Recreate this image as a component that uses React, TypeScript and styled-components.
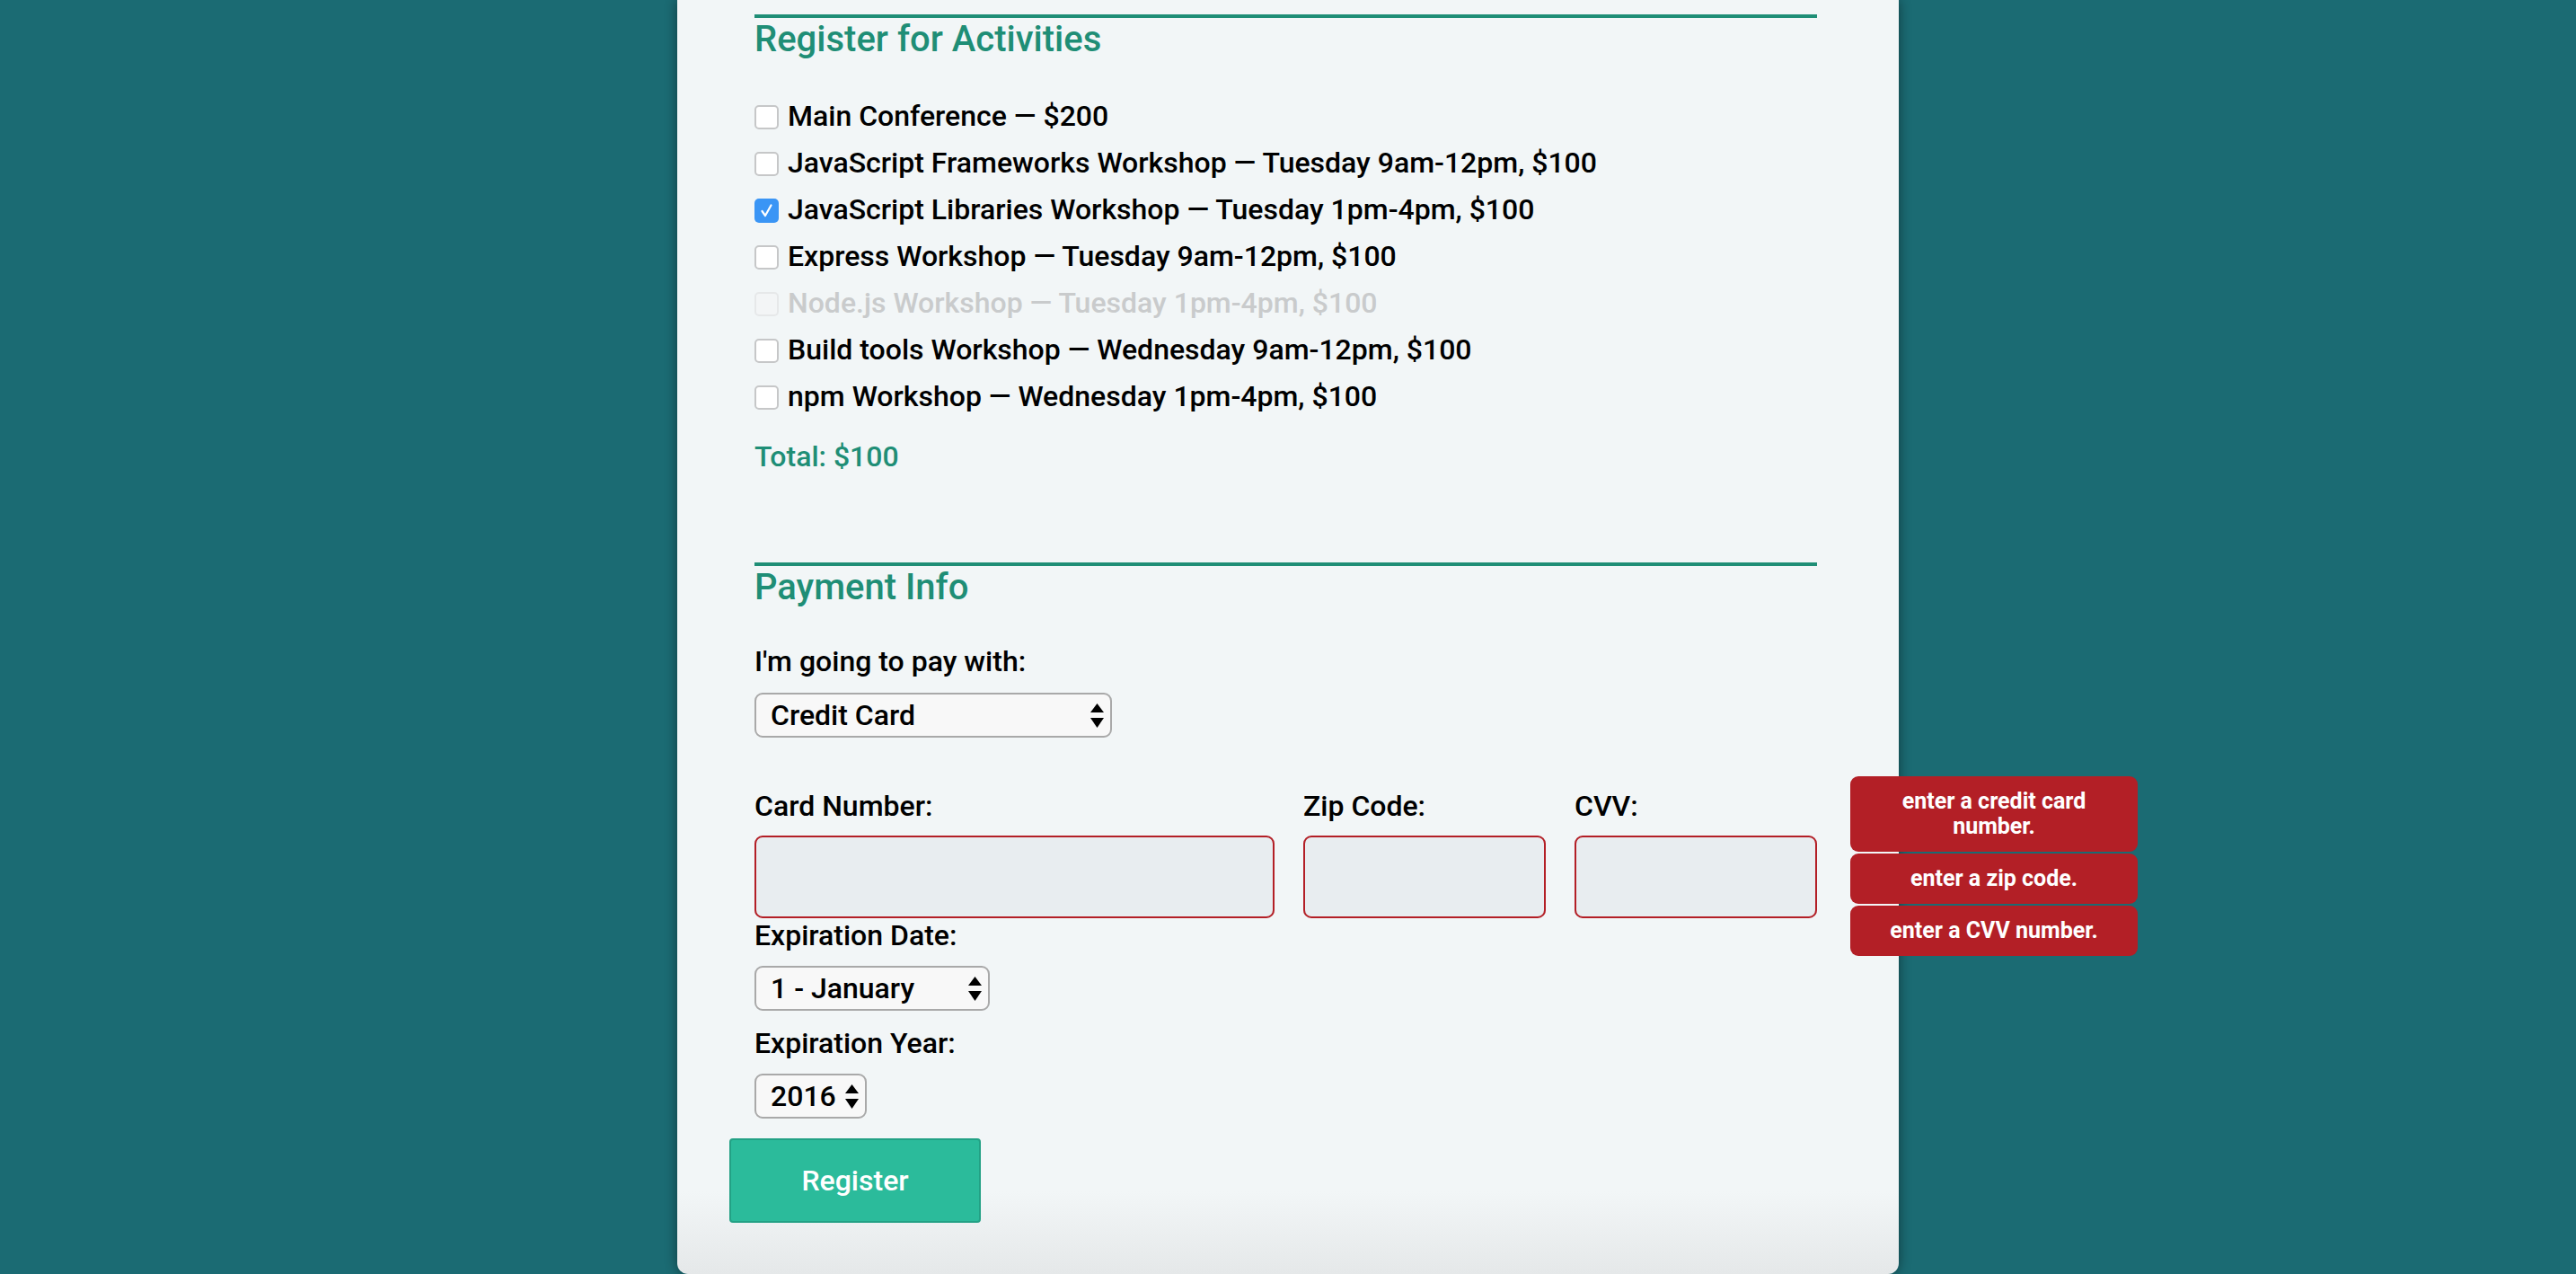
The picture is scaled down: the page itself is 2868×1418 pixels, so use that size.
import React from "react";
import styled, { createGlobalStyle } from "styled-components";

const GlobalStyle = createGlobalStyle`
  html, body {
    margin: 0;
    padding: 0;
    background: #1b6b73;
    font-family: Roboto, "Liberation Sans", Arial, sans-serif;
  }
  body {
    min-height: 1418px;
    overflow: hidden;
  }
`;

const GREEN = "#1f8e76";
const RED = "#b31f26";

const Panel = styled.main`
  box-sizing: border-box;
  width: 1360px;
  min-height: 1418px;
  margin: 0 auto;
  padding: 16px 91px 57px 86px;
  background: linear-gradient(to bottom, #f2f6f7 0, #f2f6f7 calc(100% - 92px), #e5e8e9 100%);
  border-radius: 0 0 12px 12px;
  box-shadow: 0 0 14px rgba(0, 0, 0, 0.45);
`;

const Form = styled.form`
  display: flex;
  flex-direction: column;
  align-items: flex-start;
`;

const Fieldset = styled.section<{ $mt?: number }>`
  display: flex;
  flex-direction: column;
  align-items: flex-start;
  align-self: stretch;
  margin-top: ${(p) => p.$mt ?? 0}px;
`;

const Legend = styled.h2`
  align-self: stretch;
  margin: 0;
  border-top: 4px solid ${GREEN};
  font-size: 40px;
  line-height: 48px;
  font-weight: 500;
  color: ${GREEN};
`;

const ActivityList = styled.div`
  display: flex;
  flex-direction: column;
  gap: 14px;
  margin-top: 42px;
`;

const ActivityRow = styled.label<{ $disabled?: boolean }>`
  display: flex;
  align-items: center;
  gap: 10px;
  font-size: 32px;
  line-height: 38px;
  font-weight: 500;
  color: ${(p) => (p.$disabled ? "#c9cbcc" : "#000")};
`;

const CheckBox = styled.span<{ $checked?: boolean; $disabled?: boolean }>`
  box-sizing: border-box;
  width: 27px;
  height: 27px;
  margin-top: 2px;
  flex: none;
  display: flex;
  align-items: center;
  justify-content: center;
  border-radius: 5px;
  border: ${(p) =>
    p.$checked ? "none" : p.$disabled ? "2px solid #e6e8e9" : "2px solid #c6c7c8"};
  background: ${(p) => (p.$checked ? "#3a95f5" : p.$disabled ? "#f3f5f6" : "#ffffff")};
`;

const Total = styled.p`
  margin: 29px 0 0;
  font-size: 32px;
  line-height: 38px;
  font-weight: 500;
  color: ${GREEN};
`;

const FieldLabel = styled.label<{ $mt?: number }>`
  display: block;
  margin-top: ${(p) => p.$mt ?? 0}px;
  font-size: 32px;
  line-height: 38px;
  font-weight: 500;
  color: #000;
`;

const SelectWrap = styled.div<{ $width: number; $mt?: number }>`
  position: relative;
  width: ${(p) => p.$width}px;
  height: 50px;
  margin-top: ${(p) => p.$mt ?? 0}px;
`;

const Select = styled.select`
  box-sizing: border-box;
  appearance: none;
  -webkit-appearance: none;
  width: 100%;
  height: 100%;
  padding: 0 0 0 16px;
  margin: 0;
  border: 2px solid #a9a9a9;
  border-radius: 9px;
  background: #f8f8f8;
  font-family: Roboto, "Liberation Sans", Arial, sans-serif;
  font-size: 32px;
  font-weight: 500;
  color: #000;
  outline: none;
`;

const Arrows = styled.svg`
  position: absolute;
  right: 9px;
  top: 12px;
  width: 15px;
  height: 27px;
  pointer-events: none;
`;

const CardGrid = styled.div`
  position: relative;
  display: grid;
  grid-template-columns: 579px 270px 270px;
  column-gap: 32px;
  row-gap: 14px;
  margin-top: 57px;
`;

const TextInput = styled.input<{ $invalid?: boolean }>`
  box-sizing: border-box;
  width: 100%;
  height: 92px;
  margin: 0;
  border: 2px solid ${(p) => (p.$invalid ? RED : "#a9a9a9")};
  border-radius: 9px;
  background: #e8edf0;
  font-family: inherit;
  font-size: 32px;
  padding: 0 16px;
  outline: none;
`;

const Tooltips = styled.div`
  position: absolute;
  left: 1220px;
  top: -14px;
  width: 320px;
  display: flex;
  flex-direction: column;
  gap: 2px;
`;

const Tooltip = styled.div`
  box-sizing: border-box;
  padding: 14px 22px;
  border-radius: 9px;
  background: ${RED};
  color: #fff;
  font-size: 25px;
  line-height: 28px;
  font-weight: 700;
  text-align: center;
`;

const RegisterButton = styled.button`
  box-sizing: border-box;
  width: 280px;
  height: 94px;
  margin: 22px 0 0 -28px;
  border: 2px solid #23a185;
  border-radius: 4px;
  background: #2bbb9b;
  color: #fff;
  font-family: Roboto, "Liberation Sans", Arial, sans-serif;
  font-size: 32px;
  font-weight: 500;
  cursor: pointer;
`;

const SelectArrows = () => (
  <Arrows viewBox="0 0 15 27">
    <polygon points="0,10 7.5,0 15,10" fill="#000" />
    <polygon points="0,16 15,16 7.5,27" fill="#000" />
  </Arrows>
);

const CheckMark = () => (
  <svg width="17" height="17" viewBox="0 0 17 17">
    <polyline points="3.5,9 7,14 13.5,2.5" fill="none" stroke="#fff" strokeWidth="2.2" strokeLinecap="round" strokeLinejoin="round" />
  </svg>
);

const activities = [
  { text: "Main Conference — $200" },
  { text: "JavaScript Frameworks Workshop — Tuesday 9am-12pm, $100" },
  { text: "JavaScript Libraries Workshop — Tuesday 1pm-4pm, $100", checked: true },
  { text: "Express Workshop — Tuesday 9am-12pm, $100" },
  { text: "Node.js Workshop — Tuesday 1pm-4pm, $100", disabled: true },
  { text: "Build tools Workshop — Wednesday 9am-12pm, $100" },
  { text: "npm Workshop — Wednesday 1pm-4pm, $100" },
];

export default function App() {
  return (
    <>
      <GlobalStyle />
      <Panel>
        <Form onSubmit={(e) => e.preventDefault()}>
          <Fieldset>
            <Legend>Register for Activities</Legend>
            <ActivityList>
              {activities.map((a) => (
                <ActivityRow key={a.text} $disabled={a.disabled}>
                  <CheckBox $checked={a.checked} $disabled={a.disabled}>
                    {a.checked && <CheckMark />}
                  </CheckBox>
                  {a.text}
                </ActivityRow>
              ))}
            </ActivityList>
            <Total>Total: $100</Total>
          </Fieldset>

          <Fieldset $mt={99}>
            <Legend>Payment Info</Legend>
            <FieldLabel $mt={39}>I'm going to pay with:</FieldLabel>
            <SelectWrap $width={398} $mt={16}>
              <Select defaultValue="credit card">
                <option value="credit card">Credit Card</option>
                <option value="paypal">PayPal</option>
                <option value="bitcoin">Bitcoin</option>
              </Select>
              <SelectArrows />
            </SelectWrap>

            <CardGrid>
              <FieldLabel>Card Number:</FieldLabel>
              <FieldLabel>Zip Code:</FieldLabel>
              <FieldLabel>CVV:</FieldLabel>
              <TextInput $invalid />
              <TextInput $invalid />
              <TextInput $invalid />
              <Tooltips>
                <Tooltip>enter a credit card number.</Tooltip>
                <Tooltip>enter a zip code.</Tooltip>
                <Tooltip>enter a CVV number.</Tooltip>
              </Tooltips>
            </CardGrid>

            <FieldLabel>Expiration Date:</FieldLabel>
            <SelectWrap $width={262} $mt={15}>
              <Select defaultValue="1">
                <option value="1">1 - January</option>
                <option value="2">2 - February</option>
              </Select>
              <SelectArrows />
            </SelectWrap>

            <FieldLabel $mt={17}>Expiration Year:</FieldLabel>
            <SelectWrap $width={125} $mt={15}>
              <Select defaultValue="2016">
                <option value="2016">2016</option>
                <option value="2017">2017</option>
              </Select>
              <SelectArrows />
            </SelectWrap>
          </Fieldset>

          <RegisterButton type="submit">Register</RegisterButton>
        </Form>
      </Panel>
    </>
  );
}
